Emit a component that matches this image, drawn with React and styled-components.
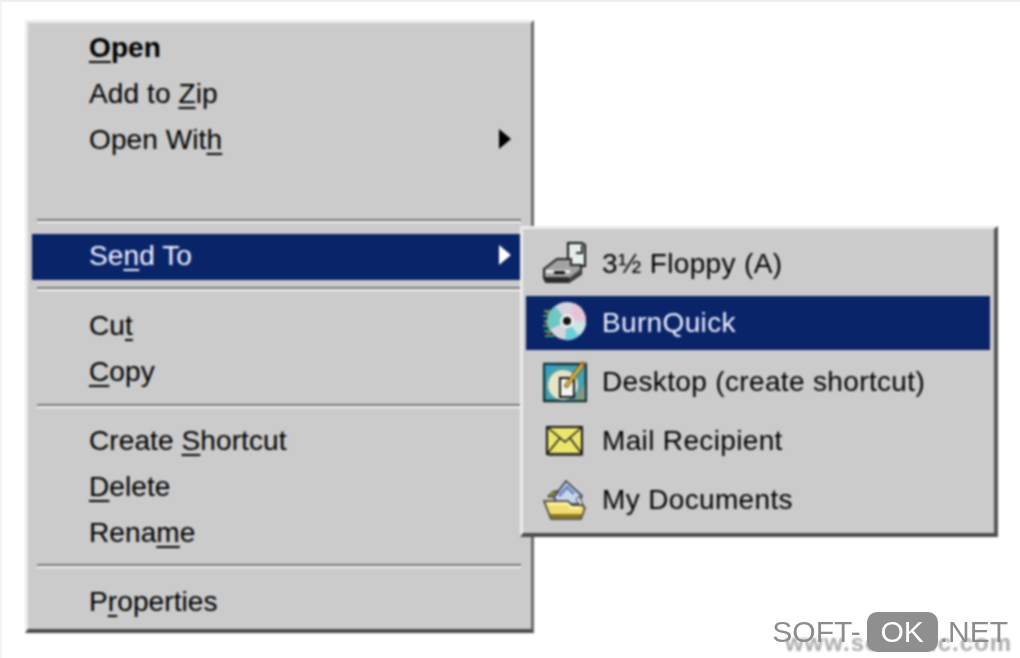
import React from "react";
import styled, { createGlobalStyle } from "styled-components";

const GlobalStyle = createGlobalStyle`
  html, body {
    margin: 0;
    padding: 0;
    background: #fff;
  }
`;

const Page = styled.div`
  position: relative;
  box-sizing: border-box;
  width: 1020px;
  height: 658px;
  overflow: hidden;
  padding: 18px 0 0 23px;
  background: #fff;
  border-top: 2px solid #eeeeee;
  border-left: 2px solid #f4f4f4;
  font-family: "Liberation Sans", Arial, sans-serif;
  font-size: 28px;
  color: #111;
`;

/* holds both menus, the submenu is placed against this box */
const Blurred = styled.div`
  position: relative;
  filter: blur(0.8px);
`;

const Menu = styled.div`
  box-sizing: border-box;
  width: 509px;
  height: 613px;
  padding: 3px 8px 0 4px;
  background: #cbcbcb;
  border-style: solid;
  border-width: 3px 3px 4px 3px;
  border-color: #ececec #6a6a6a #4a4a4a #ececec;
`;

const Row = styled.div`
  box-sizing: border-box;
  display: flex;
  align-items: center;
  justify-content: space-between;
  height: 46px;
  padding: 0 12px 2px 57px;
  letter-spacing: 0.1px;
  background: ${(p) => (p.$active ? "#0a246a" : "transparent")};
  color: ${(p) => (p.$active ? "#eef2ff" : "#000")};
  font-weight: ${(p) => (p.$bold ? 700 : 400)};
`;

const Key = styled.span`
  text-decoration: underline;
  text-decoration-thickness: 2px;
  text-underline-offset: 4px;
`;

const Arrow = styled.span`
  width: 0;
  height: 0;
  margin-bottom: 2px;
  border-style: solid;
  border-width: 10px 0 10px 12px;
  border-color: transparent transparent transparent
    ${(p) => (p.$active ? "#fff" : "#000")};
`;

const Separator = styled.div`
  height: 2px;
  margin: ${(p) => p.$top}px 2px ${(p) => p.$bottom}px 5px;
  background: #777;
  border-bottom: 2px solid #f2f2f2;
`;

const Spacer = styled.div`
  height: ${(p) => p.$height}px;
`;

const SubMenu = styled.div`
  position: absolute;
  left: 495px;
  top: 206px;
  box-sizing: border-box;
  width: 478px;
  height: 311px;
  padding: 8px 4px 0 3px;
  background: #cbcbcb;
  border-style: solid;
  border-width: 3px 4px 4px 3px;
  border-color: #ececec #555 #4a4a4a #ececec;
`;

const SubRow = styled.div`
  box-sizing: border-box;
  display: flex;
  align-items: center;
  gap: 15px;
  height: 54px;
  margin-bottom: 5px;
  padding-left: 17px;
  letter-spacing: 0.35px;
  background: ${(p) => (p.$active ? "#0a246a" : "transparent")};
  color: ${(p) => (p.$active ? "#eef2ff" : "#000")};
`;

const IconBox = styled.svg`
  flex: none;
  width: 44px;
  height: 44px;
`;

const Watermark = styled.div`
  position: absolute;
  right: 12px;
  bottom: 6px;
  display: flex;
  align-items: center;
  font-size: 30px;
  color: #8c8c8c;
  line-height: 40px;
`;

const OkBadge = styled.span`
  width: 71px;
  margin: 0 2px 0 6px;
  text-align: center;
  color: #fff;
  background: #8f8f8f;
  border-radius: 10px;
`;

const GhostUrl = styled.div`
  position: absolute;
  right: 8px;
  bottom: 1px;
  font-size: 24px;
  font-weight: 700;
  letter-spacing: 1px;
  color: #adadad;
  filter: blur(1.1px);
`;

const FloppyIcon = () => (
  <IconBox viewBox="0 0 44 44">
    <path d="M25 1h14l3 2v21H25z" fill="#e4ecee" stroke="#111" strokeWidth="2" />
    <path d="M39 3v8h-6" fill="none" stroke="#222" strokeWidth="2" />
    <path d="M1 27l13-10h14v6h10v9L26 40H3L1 36z" fill="#a2a2a2" stroke="#222" strokeWidth="2" />
    <path d="M3 28h24v3H3z" fill="#eee" />
    <path d="M11 29h11v3H11z" fill="#111" />
    <path d="M2 35h24v5H2z" fill="#2c2c2c" />
    <path d="M26 40l12-8v-5l-12 9z" fill="#444" />
  </IconBox>
);

const DiscIcon = () => (
  <IconBox viewBox="0 0 44 44">
    <path d="M1 10h8M0 15h7M1 20h5M0 25h6M1 30h8M2 35h9" stroke="#3fa05a" strokeWidth="2" />
    <path d="M3 12h4M2 22h3M4 32h4" stroke="#c84a3a" strokeWidth="2" />
    <circle cx="24" cy="20" r="19" fill="#d8d4de" />
    <path d="M24 20L12 5a19 19 0 0 0-6 24z" fill="#6fc7c0" />
    <path d="M24 20l-2 19a19 19 0 0 0 14-4z" fill="#68d0d8" />
    <path d="M24 20L31 2a19 19 0 0 1 12 16z" fill="#e6c4d8" />
    <path d="M24 20L43 22a19 19 0 0 1-6 12z" fill="#c9e8e6" />
    <circle cx="24" cy="20" r="7" fill="#eee" />
    <circle cx="24" cy="20" r="4" fill="#111" />
  </IconBox>
);

const ShortcutIcon = () => (
  <IconBox viewBox="0 0 44 44">
    <rect x="1" y="4" width="42" height="37" fill="#4aa0ae" stroke="#0f2c30" strokeWidth="2.5" />
    <path d="M2 5h10L2 16z" fill="#2f9fc6" />
    <path d="M30 40h12V24z" fill="#7e9a86" />
    <circle cx="20" cy="25" r="15" fill="#e4e4c8" />
    <path d="M17 18h14v19H17z" fill="#f4f4f0" stroke="#111" strokeWidth="2" />
    <path d="M21 26L38 3l3 3-17 22z" fill="#d8b040" stroke="#5a4410" strokeWidth="1" />
    <path d="M38 3l2-2 3 3-2 2z" fill="#c05a30" />
  </IconBox>
);

const MailIcon = () => (
  <IconBox viewBox="0 0 44 44">
    <rect x="4" y="8" width="35" height="27" fill="#ece56c" stroke="#111" strokeWidth="2" />
    <path d="M4 8l18 15L39 8M4 35l13-16M39 35L27 19" fill="none" stroke="#222" strokeWidth="1.6" />
    <path d="M5 37h35v-2H5z" fill="#444" />
  </IconBox>
);

const DocsIcon = () => (
  <IconBox viewBox="0 0 44 44">
    <path d="M5 18l6-5h8v6H5z" fill="#8f8f40" stroke="#222" strokeWidth="1" />
    <path d="M11 19L23 3l16 15-4 8H14z" fill="#c8d6ee" stroke="#1f2840" strokeWidth="1.5" />
    <path d="M16 18l8-9 7 7" fill="none" stroke="#6f88c0" strokeWidth="3" />
    <path d="M36 18l5 11-2 2-6-10z" fill="#f2f2f2" stroke="#222" strokeWidth="1" />
    <path d="M1 23h24l4 4h10l3 3-4 11H8z" fill="#f0dc70" stroke="#333" strokeWidth="1.5" />
    <path d="M5 26h20l3 4h9" fill="none" stroke="#fff6b8" strokeWidth="2" />
    <path d="M8 40h30l1-4H7z" fill="#8c7820" />
  </IconBox>
);

const subItems = [
  { label: "3½ Floppy (A)", Icon: FloppyIcon },
  { label: "BurnQuick", Icon: DiscIcon, active: true },
  { label: "Desktop (create shortcut)", Icon: ShortcutIcon },
  { label: "Mail Recipient", Icon: MailIcon },
  { label: "My Documents", Icon: DocsIcon },
];

const App = () => {
  return (
    <Page>
      <GlobalStyle />
      <Blurred>
        <Menu>
          <Row $bold>
            <span>
              <Key>O</Key>pen
            </span>
          </Row>
          <Row>
            <span>
              Add to <Key>Z</Key>ip
            </span>
          </Row>
          <Row>
            <span>
              Open Wit<Key>h</Key>
            </span>
            <Arrow />
          </Row>
          <Spacer $height={52} />
          <Separator $top={3} $bottom={11} />
          <Row $active>
            <span>
              Se<Key>n</Key>d To
            </span>
            <Arrow $active />
          </Row>
          <Separator $top={7} $bottom={13} />
          <Row>
            <span>
              Cu<Key>t</Key>
            </span>
          </Row>
          <Row>
            <span>
              <Key>C</Key>opy
            </span>
          </Row>
          <Separator $top={8} $bottom={11} />
          <Row>
            <span>
              Create <Key>S</Key>hortcut
            </span>
          </Row>
          <Row>
            <span>
              <Key>D</Key>elete
            </span>
          </Row>
          <Row>
            <span>
              Rena<Key>m</Key>e
            </span>
          </Row>
          <Separator $top={7} $bottom={12} />
          <Row>
            <span>
              P<Key>r</Key>operties
            </span>
          </Row>
        </Menu>
        <SubMenu>
          {subItems.map(({ label, Icon, active }) => (
            <SubRow key={label} $active={active}>
              <Icon />
              <span>{label}</span>
            </SubRow>
          ))}
        </SubMenu>
      </Blurred>
      <GhostUrl>www.softonic.com</GhostUrl>
      <Watermark>
        <span>SOFT-</span>
        <OkBadge>OK</OkBadge>
        <span>.NET</span>
      </Watermark>
    </Page>
  );
};

export default App;
